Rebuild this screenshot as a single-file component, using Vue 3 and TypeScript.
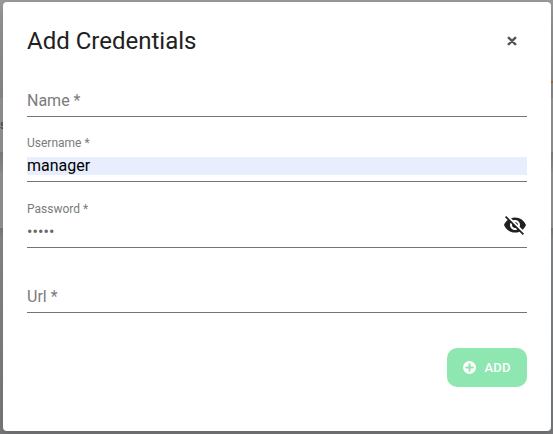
<script setup lang="ts">
import { ref } from 'vue'

interface Field {
  id: string
  label: string
  value: string
  secret?: boolean
}

const fields = ref<Field[]>([
  { id: 'name', label: 'Name *', value: '' },
  { id: 'username', label: 'Username *', value: 'manager' },
  { id: 'password', label: 'Password *', value: '•••••', secret: true },
  { id: 'url', label: 'Url *', value: '' },
])
</script>

<template>
  <div class="backdrop">
    <div class="rows">
      <div class="row top"></div>
      <div class="row first"><span class="cell">s</span><span class="mark"></span></div>
      <div class="row gap"></div>
      <div class="row second"></div>
      <div class="row rest"></div>
    </div>
    <section class="dialog" role="dialog">
      <header class="head">
        <h2 class="title">Add Credentials</h2>
        <button class="close" type="button" aria-label="Close">
          <svg width="10" height="10" viewBox="0 0 10 10">
            <path d="M1.8 1.8L8.2 8.2M8.2 1.8L1.8 8.2" stroke="#51585a" stroke-width="2.5" stroke-linecap="round" />
          </svg>
        </button>
      </header>
      <div class="fields">
        <div v-for="f in fields" :key="f.id" class="field" :class="[f.id, { filled: f.value }]">
          <div class="body">
            <span class="label">{{ f.label }}</span>
            <span v-if="f.value" class="value">{{ f.value }}</span>
          </div>
          <svg v-if="f.secret" class="eye" width="24" height="24" viewBox="0 0 24 24">
            <path fill="#212121" d="M12 7c2.76 0 5 2.24 5 5 0 .65-.13 1.26-.36 1.83l2.92 2.92c1.51-1.26 2.7-2.89 3.43-4.75-1.73-4.39-6-7.5-11-7.5-1.4 0-2.74.25-3.98.7l2.16 2.16C10.74 7.13 11.35 7 12 7zM2 4.27l2.28 2.28.46.46C3.08 8.3 1.78 10.02 1 12c1.73 4.39 6 7.5 11 7.5 1.55 0 3.03-.3 4.38-.84l.42.42L19.73 22 21 20.73 3.27 3 2 4.27zM7.53 9.8l1.55 1.55c-.05.21-.08.43-.08.65 0 1.66 1.34 3 3 3 .22 0 .44-.03.65-.08l1.55 1.55c-.67.33-1.41.53-2.2.53-2.76 0-5-2.24-5-5 0-.79.2-1.53.53-2.2zm4.31-.78l3.15 3.15.02-.16c0-1.66-1.34-3-3-3l-.17.01z" />
          </svg>
        </div>
      </div>
      <footer class="actions">
        <button class="add" type="button">
          <svg width="13" height="13" viewBox="0 0 13 13">
            <circle cx="6.5" cy="6.5" r="6.5" fill="#fff" />
            <path d="M6.5 3.2V9.8M3.2 6.5H9.8" stroke="#8ee7b0" stroke-width="2" stroke-linecap="round" />
          </svg>
          <span>ADD</span>
        </button>
      </footer>
    </section>
  </div>
</template>

<style>
body {
  margin: 0;
  overflow: hidden;
}
</style>

<style scoped>
.backdrop {
  position: relative;
  width: 553px;
  height: 434px;
  box-sizing: border-box;
  padding: 2px 2px 3px 3px;
  background: #828384;
  font-family: Roboto, "Liberation Sans", sans-serif;
  overflow: hidden;
}
.rows {
  position: absolute;
  inset: 0;
  display: flex;
  flex-direction: column;
}
.top {
  height: 98px;
  background: linear-gradient(#999797, #868788);
}
.first {
  height: 54px;
  background: #929293;
  display: flex;
  align-items: center;
  justify-content: space-between;
}
.cell {
  font-size: 12px;
  line-height: 14px;
  font-weight: 500;
  color: #3f4a60;
}
.mark {
  width: 2px;
  height: 2px;
  margin-bottom: 87px;
  background: #a06a30;
}
.gap {
  height: 20px;
  background: linear-gradient(#7b7c7d, #8b8d8f);
}
.second {
  height: 56px;
  background: #929293;
}
.rest {
  flex: 1;
  background: linear-gradient(#777879, #858687 12px, #77787a);
}
.dialog {
  position: relative;
  width: 548px;
  height: 429px;
  box-sizing: border-box;
  padding: 24px;
  background: #fff;
  border-radius: 4px;
  box-shadow: 0 6px 10px rgba(0, 0, 0, 0.12);
}
.head {
  display: flex;
  justify-content: space-between;
  height: 32px;
}
.title {
  margin: 0;
  font-size: 24px;
  line-height: 31px;
  font-weight: 400;
  color: #212121;
}
.close {
  width: 30px;
  height: 30px;
  padding: 0;
  border: 0;
  background: none;
  display: flex;
  align-items: center;
  justify-content: center;
}
.fields {
  display: grid;
  grid-template-rows: 59px 65px 66px 65px;
}
.field {
  display: flex;
  justify-content: space-between;
  align-items: flex-end;
  border-bottom: 1px solid #757575;
}
.body {
  flex: 1;
  display: flex;
  flex-direction: column;
}
.label {
  font-size: 16px;
  line-height: 18px;
  padding-bottom: 6px;
  color: #7b7b7b;
}
.filled .label {
  font-size: 12px;
  line-height: 14px;
  padding-bottom: 7px;
}
.value {
  font-size: 16px;
  line-height: 18px;
  height: 18px;
  margin-bottom: 6px;
  color: #000;
}
.username .value {
  background: #e8eefe;
}
.password .value {
  color: #666;
  letter-spacing: 0.1px;
}
.eye {
  margin-bottom: 10px;
}
.actions {
  display: flex;
  justify-content: flex-end;
  padding-top: 35px;
}
.add {
  width: 80px;
  height: 39px;
  padding: 0;
  border: 0;
  border-radius: 10px;
  background: #8ee7b0;
  color: #fff;
  display: flex;
  align-items: center;
  justify-content: center;
  gap: 8px;
  font: 500 13px/20px Roboto, sans-serif;
  letter-spacing: 0.2px;
}
</style>
